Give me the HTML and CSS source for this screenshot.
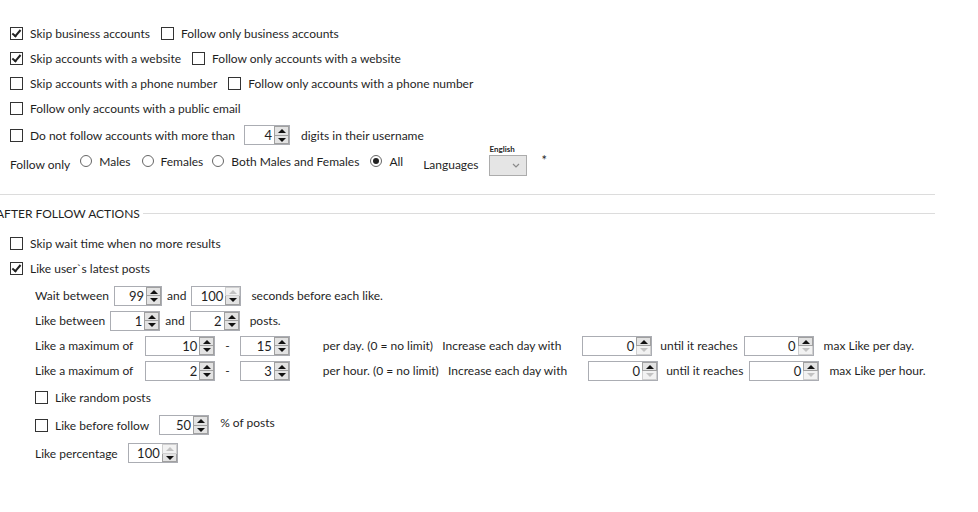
FILE: index.html
```html
<!DOCTYPE html>
<html lang="en">
<head>
  <meta charset="UTF-8">
  <title>Follow settings</title>
  <link rel="stylesheet" href="styles.css">
</head>
<body>
  <div class="panel">
    <!-- account filters -->
    <section class="filters">
      <div class="row">
        <label class="check"><span class="box on"></span>Skip business accounts</label>
        <label class="check"><span class="box"></span>Follow only business accounts</label>
      </div>
      <div class="row">
        <label class="check"><span class="box on"></span>Skip accounts with a website</label>
        <label class="check"><span class="box"></span>Follow only accounts with a website</label>
      </div>
      <div class="row">
        <label class="check"><span class="box"></span>Skip accounts with a phone number</label>
        <label class="check"><span class="box"></span>Follow only accounts with a phone number</label>
      </div>
      <div class="row">
        <label class="check"><span class="box"></span>Follow only accounts with a public email</label>
      </div>
      <div class="row row-tall">
        <label class="check"><span class="box"></span>Do not follow accounts with more than</label>
        <div class="spin w46 ml-digits"><span class="val">4</span><span class="btns"><i class="up"></i><i class="down"></i></span></div>
        <span class="ml-text">digits in their username</span>
      </div>
      <div class="row row-gender">
        <span class="lbl-follow">Follow only</span>
        <label class="radio r-males"><span class="dot"></span>Males</label>
        <label class="radio r-females"><span class="dot"></span>Females</label>
        <label class="radio r-both"><span class="dot"></span>Both Males and Females</label>
        <label class="radio r-all"><span class="dot on"></span>All</label>
        <span class="lbl-lang">Languages</span>
        <div class="lang">
          <span class="lang-cap">English</span>
          <div class="combo"><svg width="8" height="5" viewBox="0 0 8 5"><path d="M1 1l3 3 3-3" fill="none" stroke="#8a8a8a" stroke-width="1.2"/></svg></div>
        </div>
        <span class="star">*</span>
      </div>
    </section>

    <hr class="sep">

    <div class="group-title"><span>AFTER FOLLOW ACTIONS</span></div>

    <!-- after follow actions -->
    <section class="actions">
      <div class="row">
        <label class="check"><span class="box"></span>Skip wait time when no more results</label>
      </div>
      <div class="row">
        <label class="check"><span class="box on"></span>Like user`s latest posts</label>
      </div>

      <div class="likes">
        <div class="row">
          <span class="t-wait">Wait between</span>
          <div class="spin w48"><span class="val">99</span><span class="btns"><i class="up"></i><i class="down"></i></span></div>
          <span class="t-and">and</span>
          <div class="spin w50"><span class="val">100</span><span class="btns"><i class="up off"></i><i class="down"></i></span></div>
          <span class="t-after">seconds before each like.</span>
        </div>
        <div class="row">
          <span class="t-between">Like between</span>
          <div class="spin w50"><span class="val">1</span><span class="btns"><i class="up"></i><i class="down"></i></span></div>
          <span class="t-and">and</span>
          <div class="spin w50"><span class="val">2</span><span class="btns"><i class="up"></i><i class="down"></i></span></div>
          <span class="t-after">posts.</span>
        </div>
        <div class="row">
          <span class="t-max">Like a maximum of</span>
          <div class="spin w70"><span class="val">10</span><span class="btns"><i class="up"></i><i class="down"></i></span></div>
          <span class="t-dash">-</span>
          <div class="spin w50"><span class="val">15</span><span class="btns"><i class="up"></i><i class="down"></i></span></div>
          <span class="t-per">per day. (0 = no limit)&nbsp;&nbsp; Increase each day with</span>
          <div class="spin w70"><span class="val">0</span><span class="btns"><i class="up"></i><i class="down off"></i></span></div>
          <span class="t-until">until it reaches</span>
          <div class="spin w70"><span class="val">0</span><span class="btns"><i class="up"></i><i class="down off"></i></span></div>
          <span class="t-last">max Like per day.</span>
        </div>
        <div class="row">
          <span class="t-max">Like a maximum of</span>
          <div class="spin w70"><span class="val">2</span><span class="btns"><i class="up"></i><i class="down"></i></span></div>
          <span class="t-dash">-</span>
          <div class="spin w50"><span class="val">3</span><span class="btns"><i class="up"></i><i class="down"></i></span></div>
          <span class="t-per">per hour. (0 = no limit)&nbsp;&nbsp; Increase each day with</span>
          <div class="spin w70"><span class="val">0</span><span class="btns"><i class="up"></i><i class="down off"></i></span></div>
          <span class="t-until">until it reaches</span>
          <div class="spin w70"><span class="val">0</span><span class="btns"><i class="up"></i><i class="down off"></i></span></div>
          <span class="t-last">max Like per hour.</span>
        </div>
        <div class="row row-loose">
          <label class="check"><span class="box"></span>Like random posts</label>
        </div>
        <div class="row row-loose">
          <label class="check"><span class="box"></span>Like before follow</label>
          <div class="spin w50 ml-before"><span class="val">50</span><span class="btns"><i class="up"></i><i class="down"></i></span></div>
          <span class="t-pct">% of posts</span>
        </div>
        <div class="row row-loose">
          <span class="t-pctlbl">Like percentage</span>
          <div class="spin w50"><span class="val">100</span><span class="btns"><i class="up off"></i><i class="down"></i></span></div>
        </div>
      </div>
    </section>
  </div>
</body>
</html>
```

FILE: styles.css
```css
body {
  margin: 0;
  background: #fff;
  color: #1f1f1f;
  font-family: Lato, "Liberation Sans", sans-serif;
  font-size: 12px;
  overflow: hidden;
}
.panel {
  width: 978px;
  height: 512px;
}
.row {
  display: flex;
  align-items: center;
  height: 25px;
  white-space: nowrap;
}
.filters {
  padding: 21px 0 0 10px;
}
.row-tall {
  height: 28px;
}
.row-gender {
  height: 30px;
}

/* checkboxes */
.check {
  display: flex;
  align-items: center;
  margin-right: 11px;
}
.box {
  width: 11px;
  height: 11px;
  border: 1px solid #333;
  background: #fff;
  margin-right: 7px;
  position: relative;
}
.box.on::after {
  content: "";
  position: absolute;
  left: 3px;
  top: 0;
  width: 3px;
  height: 7px;
  border: solid #222;
  border-width: 0 2px 2px 0;
  transform: rotate(40deg);
}

/* radio buttons */
.radio {
  display: flex;
  align-items: center;
  margin-top: -6px;
}
.dot {
  width: 10px;
  height: 10px;
  border: 1px solid #666;
  border-radius: 50%;
  margin-right: 7px;
  position: relative;
}
.dot.on::after {
  content: "";
  position: absolute;
  left: 2px;
  top: 2px;
  width: 6px;
  height: 6px;
  border-radius: 50%;
  background: #222;
}
.lbl-follow { margin-right: 10px; }
.r-males { margin-right: 11px; }
.r-females { margin-right: 9px; }
.r-both { margin-right: 11px; }
.r-all { margin-right: 20px; }
.lbl-lang { margin-right: 10px; }

.lang {
  position: relative;
  margin-right: 15px;
}
.lang-cap {
  position: absolute;
  left: 1px;
  top: -8px;
  font-size: 8px;
  font-weight: bold;
}
.combo {
  width: 38px;
  height: 21px;
  border: 1px solid #acacac;
  background: #e5e5e5;
  display: flex;
  align-items: center;
  justify-content: flex-end;
  padding-right: 6px;
  box-sizing: border-box;
  margin-top: 3px;
}
.star {
  font-size: 13px;
  margin-top: -8px;
}

/* numeric up/down */
.spin {
  display: flex;
  height: 20px;
  border: 1px solid #abadb3;
  box-sizing: border-box;
  background: #fff;
}
.spin .val {
  flex: 1;
  text-align: right;
  line-height: 18px;
  font-size: 13px;
  padding-right: 2px;
}
.btns {
  width: 15px;
  display: flex;
  flex-direction: column;
}
.btns i {
  flex: 1;
  background: #e3e3e3;
  border: 1px solid #a0a0a0;
  position: relative;
}
.btns i + i {
  border-top: 0;
}
.btns i::after {
  content: "";
  position: absolute;
  left: 3px;
  border-left: 4px solid transparent;
  border-right: 4px solid transparent;
}
.btns .up::after {
  top: 2px;
  border-bottom: 4px solid #111;
}
.btns .down::after {
  top: 2px;
  border-top: 4px solid #111;
}
.btns .up.off::after { border-bottom-color: #c2c2c2; }
.btns .down.off::after { border-top-color: #c2c2c2; }
.btns i.off { background: #f2f2f2; border-color: #cfcfcf; }

.w46 { width: 46px; }
.w48 { width: 48px; }
.w50 { width: 50px; }
.w70 { width: 70px; }
.ml-digits { margin-left: -2px; }
.ml-text { margin-left: 11px; }

/* divider + group header */
.sep {
  margin: 15px 43px 0 0;
  border: 0;
  border-top: 1px solid #dcdcdc;
}
.group-title {
  display: flex;
  align-items: center;
  margin: 11px 43px 0 -4px;
  height: 14px;
}
.group-title::after {
  content: "";
  flex: 1;
  border-top: 1px solid #dcdcdc;
  margin-left: 3px;
}

.actions {
  padding: 11px 0 0 10px;
}
.likes {
  padding: 2px 0 0 25px;
}
.row-loose {
  height: 28px;
}
.t-wait { margin-right: 5px; }
.t-between { margin-right: 5px; }
.t-max { margin-right: 12px; }
.t-and { margin: 0 5px; }
.t-after { margin-left: 10px; }
.t-dash { margin: 0 10px; }
.t-per { margin: 0 21px 0 33px; }
.t-until { margin: 0 6px 0 8px; }
.t-last { margin-left: 10px; }
.ml-before { margin-left: -1px; }
.t-pct { margin-left: 11px; margin-top: -5px; }
.t-pctlbl { margin-right: 10px; }
```
